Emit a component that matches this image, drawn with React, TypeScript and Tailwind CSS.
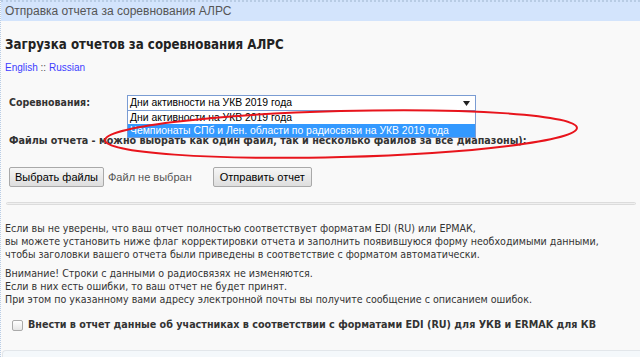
import React from 'react';

const verdana = { fontFamily: '"DejaVu Sans Condensed", "DejaVu Sans", Verdana, sans-serif' };
const arial = { fontFamily: '"Liberation Sans", Arial, sans-serif' };

export default function App() {
  return (
    <div className="relative w-[640px] h-[357px] overflow-hidden bg-[#f9f9f9] border-l border-dotted border-[#b9cde6]">
      {/* Title bar */}
      <div
        className="h-[21px] bg-[#d3e4fc] border-t-2 border-dotted border-[#b8cce4] pl-[4px] text-[12px] leading-[18px] text-[#555]"
        style={arial}
      >
        Отправка отчета за соревнования АЛРС
      </div>

      <div className="px-[4px] text-[#333]">
        <h2 className="mt-[16px] text-[13.2px] font-bold leading-[16px] text-[#222]" style={verdana}>
          Загрузка отчетов за соревнования АЛРС
        </h2>
        <div className="mt-[9px] text-[10px] leading-[12px] text-[#3d3dff]" style={arial}>
          <span>English</span> <span className="text-[#555]">::</span> <span>Russian</span>
        </div>

        {/* Competition select */}
        <div className="mt-[21px] flex items-center pl-[4px]">
          <span className="w-[118px] text-[10.5px] font-bold" style={verdana}>
            Соревнования:
          </span>
          <div className="relative z-10 w-[349px]">
            <div
              className="flex h-[16px] items-center justify-between border border-[#7a9cd3] bg-white pl-[2px] pr-[5px] text-[10.4px] text-black"
              style={arial}
            >
              <span>Дни активности на УКВ 2019 года</span>
              <svg width="7" height="5" viewBox="0 0 7 5">
                <path d="M0 0h7L3.5 5z" fill="#222" />
              </svg>
            </div>
            <div className="absolute left-0 top-full w-full border border-t-0 border-[#7a9cd3] bg-white text-[10.4px] leading-[13px]" style={arial}>
              <div className="pl-[2px] text-black">Дни активности на УКВ 2019 года</div>
              <div className="bg-[#3399ff] pl-[2px] text-white">
                Чемпионаты СПб и Лен. области по радиосвязи на УКВ 2019 года
              </div>
            </div>
          </div>
        </div>

        <div className="mt-[23px] pl-[4px] text-[10.7px] font-bold leading-[14px]" style={verdana}>
          Файлы отчета - можно выбрать как один файл, так и несколько файлов за все диапазоны):
        </div>

        {/* File buttons */}
        <div className="mt-[19px] flex items-center pl-[4px] text-[11px]" style={arial}>
          <button className="h-[20px] rounded-[2px] border border-[#a9a9a9] bg-gradient-to-b from-[#f6f6f6] to-[#dedede] px-[5px] text-black">
            Выбрать файлы
          </button>
          <span className="ml-[4px] text-[#555]">Файл не выбран</span>
          <button className="ml-[21px] h-[20px] rounded-[2px] border border-[#a9a9a9] bg-gradient-to-b from-[#f6f6f6] to-[#dedede] px-[6px] text-black">
            Отправить отчет
          </button>
        </div>

        <div className="mt-[15px] ml-[1px] h-[3px] rounded-full border border-[#dcdcdc] bg-[#f0f0f0]" />

        {/* Notes */}
        <div className="mt-[17px] text-[10.6px] leading-[13px]" style={verdana}>
          <p>Если вы не уверены, что ваш отчет полностью соответствует форматам EDI (RU) или ЕРМАК,</p>
          <p>вы можете установить ниже флаг корректировки отчета и заполнить появившуюся форму необходимыми данными,</p>
          <p>чтобы заголовки вашего отчета были приведены в соответствие с форматом автоматически.</p>
          <p className="mt-[6px]">Внимание! Строки с данными о радиосвязях не изменяются.</p>
          <p>Если в них есть ошибки, то ваш отчет не будет принят.</p>
          <p>При этом по указанному вами адресу электронной почты вы получите сообщение с описанием ошибок.</p>
        </div>

        <label className="mt-[11px] flex items-center pl-[7px] text-[10.7px] font-bold" style={verdana}>
          <span className="mr-[5px] h-[11px] w-[11px] shrink-0 rounded-[2px] border border-[#aaa] bg-gradient-to-b from-white to-[#e6e6e6]" />
          Внести в отчет данные об участниках в соответствии с форматами EDI (RU) для УКВ и ERMAK для КВ
        </label>
      </div>

      {/* Bottom edge of the panel */}
      <div className="absolute bottom-0 left-[1px] right-0 h-[7px] rounded-tl-[4px] border-t border-l border-[#e2e6ea] bg-[#f4f8fb]" />

      {/* Red annotation ellipse */}
      <svg className="pointer-events-none absolute left-0 top-0 z-20" width="640" height="357">
        <ellipse cx="340" cy="134" rx="236" ry="23" fill="none" stroke="#e8141c" strokeWidth="2" transform="rotate(-1.5 340 134)" />
      </svg>
    </div>
  );
}
